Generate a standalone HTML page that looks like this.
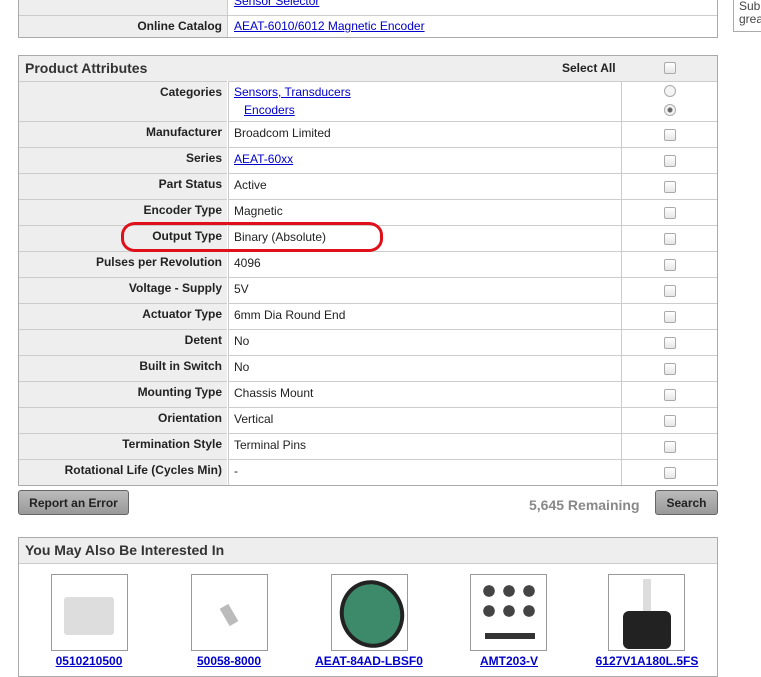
<!DOCTYPE html>
<html><head><style>
body{margin:0;width:761px;height:668px;overflow:hidden;background:#fff;font-family:"Liberation Sans",Arial,sans-serif;font-size:12px;color:#222;position:relative}
.a{position:absolute}
a{color:#0000cc;text-decoration:underline}
.lab{position:absolute;left:19px;width:208px;background:#eee;text-align:right;font-weight:bold;box-sizing:border-box;padding-right:5px;border-top:1px solid #ccc}
.val{position:absolute;left:228px;width:393px;box-sizing:border-box;padding-left:5px;border-top:1px solid #ccc;border-left:1px solid #ccc}
.chk{position:absolute;left:621px;width:96px;border-top:1px solid #ccc;border-left:1px solid #ccc;box-sizing:border-box}
.cb{position:absolute;left:664px;width:10px;height:10px;border:1px solid #aaa;border-radius:2px;background:linear-gradient(#fff,#e6e6e6)}
.btn{position:absolute;height:25px;border:1px solid #666;border-radius:3px;background:linear-gradient(#bbb,#999);font-weight:bold;font-size:12px;line-height:25px;text-align:center;color:#222;box-sizing:border-box}
.img{position:absolute;top:574px;width:77px;height:77px;border:1px solid #999;box-sizing:border-box;background:#fff}
.pl{position:absolute;top:654px;font-weight:bold;font-size:12px;text-align:center;width:130px}
</style></head><body>
<div class="a" style="left:18px;top:0;width:700px;height:38px;border:1px solid #aaa;border-top:none;box-sizing:border-box;background:#fff"></div>
<div class="a" style="left:19px;top:0;width:208px;height:37px;background:#eee"></div>
<div class="a" style="left:227px;top:0;width:1px;height:37px;background:#ccc"></div>
<div class="a" style="left:19px;top:15px;width:698px;height:1px;background:#ccc"></div>
<div class="a" style="left:234px;top:-6px"><a>Sensor Selector</a></div>
<div class="a" style="left:19px;top:19px;width:203px;text-align:right;font-weight:bold">Online Catalog</div>
<div class="a" style="left:234px;top:19px"><a>AEAT-6010/6012 Magnetic Encoder</a></div>
<div class="a" style="left:733px;top:-1px;width:40px;height:31px;border:1px solid #aaa;font-size:12px;line-height:13px;padding-left:5px;color:#444">Sub<br>grea</div>

<div class="a" style="left:18px;top:55px;width:700px;height:431px;border:1px solid #aaa;box-sizing:border-box"></div>
<div class="a" style="left:19px;top:56px;width:698px;height:25px;background:#eee"></div>
<div class="a" style="left:25px;top:60px;font-size:14px;font-weight:bold;color:#333">Product Attributes</div>
<div class="a" style="left:562px;top:61px;font-weight:bold">Select All</div>
<div class="cb" style="top:62px"></div>

<div class="lab" style="top:81px;height:40px;padding-top:3px">Categories</div>
<div class="val" style="top:81px;height:40px;padding-top:1px;line-height:18px"><a>Sensors, Transducers</a><br>&nbsp;&nbsp;&nbsp;<a>Encoders</a></div>
<div class="chk" style="top:81px;height:40px"></div>
<div class="a" style="left:664px;top:85px;width:10px;height:10px;border:1px solid #aaa;border-radius:50%;background:#f4f4f4"></div>
<div class="a" style="left:664px;top:104px;width:10px;height:10px;border:1px solid #aaa;border-radius:50%;background:radial-gradient(#666 2px,#f4f4f4 3px)"></div>

<div id="rows"></div>
<script>
var r=[["Manufacturer","Broadcom Limited"],["Series","<a>AEAT-60xx</a>"],["Part Status","Active"],["Encoder Type","Magnetic"],["Output Type","Binary (Absolute)"],["Pulses per Revolution","4096"],["Voltage - Supply","5V"],["Actuator Type","6mm Dia Round End"],["Detent","No"],["Built in Switch","No"],["Mounting Type","Chassis Mount"],["Orientation","Vertical"],["Termination Style","Terminal Pins"],["Rotational Life (Cycles Min)","-"]];
var h="";r.forEach(function(x,i){var t=121+i*26;
h+='<div class="lab" style="top:'+t+'px;height:26px;padding-top:3px">'+x[0]+'</div><div class="val" style="top:'+t+'px;height:26px;padding-top:4px">'+x[1]+'</div><div class="chk" style="top:'+t+'px;height:26px"></div><div class="cb" style="top:'+(t+8)+'px"></div>';});
document.getElementById("rows").innerHTML=h;
</script>
<div class="a" style="left:121px;top:222px;width:256px;height:24px;border:3px solid #e0101a;border-radius:14px/13px"></div>

<div class="btn" style="left:18px;top:490px;width:111px">Report an Error</div>
<div class="a" style="left:529px;top:497px;font-size:14px;font-weight:bold;color:#888">5,645 Remaining</div>
<div class="btn" style="left:655px;top:490px;width:63px">Search</div>

<div class="a" style="left:18px;top:537px;width:700px;height:140px;border:1px solid #aaa;box-sizing:border-box"></div>
<div class="a" style="left:19px;top:538px;width:698px;height:25px;background:#eee;border-bottom:1px solid #ccc"></div>
<div class="a" style="left:25px;top:542px;font-size:14px;font-weight:bold;color:#333">You May Also Be Interested In</div>

<div class="img" style="left:51px"><div class="a" style="left:12px;top:22px;width:50px;height:38px;background:#ddd;border-radius:3px"></div></div>
<div class="img" style="left:191px"><div class="a" style="left:32px;top:30px;width:10px;height:20px;background:#bbb;transform:rotate(-30deg)"></div></div>
<div class="img" style="left:331px"><div class="a" style="left:8px;top:5px;width:64px;height:68px;background:#3d8a6a;border-radius:50%;border:4px solid #222;box-sizing:border-box;transform:rotate(-20deg)"></div></div>
<div class="img" style="left:470px"><div class="a" style="left:8px;top:6px;width:60px;height:40px;background:radial-gradient(#444 40%,transparent 42%) 0 0/20px 20px"></div><div class="a" style="left:14px;top:58px;width:50px;height:6px;background:#333"></div></div>
<div class="img" style="left:608px"><div class="a" style="left:34px;top:4px;width:8px;height:32px;background:#ddd"></div><div class="a" style="left:14px;top:36px;width:48px;height:38px;background:#222;border-radius:6px"></div></div>

<div class="pl" style="left:24px"><a>0510210500</a></div>
<div class="pl" style="left:164px"><a>50058-8000</a></div>
<div class="pl" style="left:304px"><a>AEAT-84AD-LBSF0</a></div>
<div class="pl" style="left:444px"><a>AMT203-V</a></div>
<div class="pl" style="left:582px"><a>6127V1A180L.5FS</a></div>
</body></html>
